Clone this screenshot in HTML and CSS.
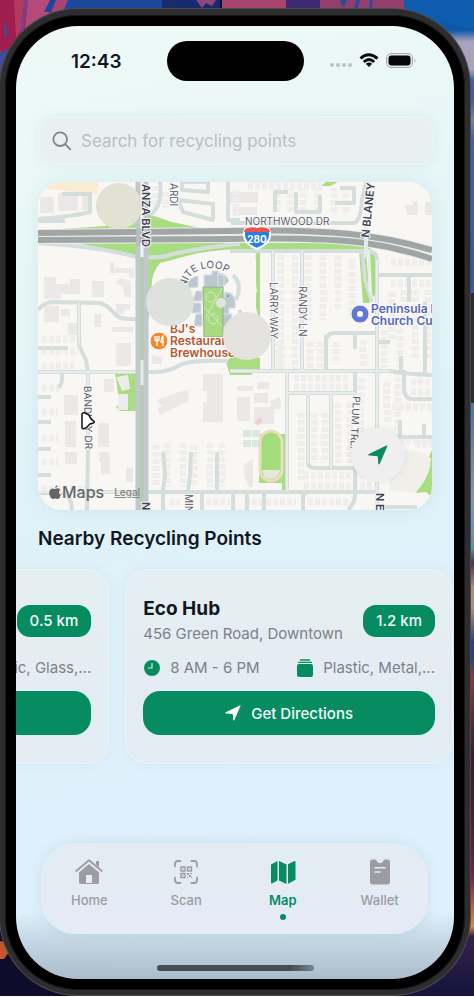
FILE: index.html
```html
<!DOCTYPE html>
<html lang="en">
<head>
<meta charset="utf-8">
<meta name="viewport" content="width=device-width, initial-scale=1">
<title>Recycling Points</title>
<link rel="stylesheet" href="styles.css">
</head>
<body>
<svg class="wallpaper" viewBox="0 0 474 997" preserveAspectRatio="none" aria-hidden="true">
  <defs>
    <linearGradient id="edge" x1="0" y1="0" x2="0" y2="1">
      <stop offset="0" stop-color="#1266b4"/><stop offset=".03" stop-color="#0b56a6"/>
      <stop offset=".042" stop-color="#a9a3bd"/><stop offset=".07" stop-color="#a9a3bd"/>
      <stop offset=".08" stop-color="#3d68ab"/><stop offset=".1" stop-color="#335fa5"/>
      <stop offset=".12" stop-color="#7482b0"/><stop offset=".14" stop-color="#3667ae"/>
      <stop offset=".28" stop-color="#2a5eae"/><stop offset=".42" stop-color="#5379ad"/>
      <stop offset=".5" stop-color="#8395b4"/><stop offset=".55" stop-color="#5d91b4"/>
      <stop offset=".565" stop-color="#52305f"/><stop offset=".59" stop-color="#b98a72"/>
      <stop offset=".61" stop-color="#b98a72"/><stop offset=".645" stop-color="#1b4496"/>
      <stop offset=".66" stop-color="#1b4496"/><stop offset=".68" stop-color="#94343e"/>
      <stop offset=".76" stop-color="#40182e"/><stop offset=".83" stop-color="#5a1730"/>
      <stop offset=".88" stop-color="#7e1d4b"/><stop offset=".91" stop-color="#c45d31"/>
      <stop offset=".93" stop-color="#d98a36"/><stop offset=".94" stop-color="#35214c"/>
      <stop offset="1" stop-color="#15143a"/>
    </linearGradient>
  </defs>
  <rect width="474" height="997" fill="#0f0c2b"/>
  <rect x="400" width="74" height="997" fill="url(#edge)"/>
  <path d="M0 0H80V70H0Z" fill="#a01d4f"/>
  <path d="M14 0h14l-4 24-8 14z" fill="#b23a5f"/>
  <path d="M24 0h4l-4 30-4 6z" fill="#7d3f8c"/>
  <path d="M28 0h24l-3 14-24 14z" fill="#b34a78"/>
  <path d="M0 52l12-4-8 20-4 6zM4 20l4 12-3 8z" fill="#3e4c96"/>
  <path d="M50 0h116v12H44z" fill="#1d479b"/>
  <path d="M56 0h12l-5 12H51z" fill="#a64375"/>
  <path d="M68 0h7v12h-7z" fill="#1a4a9f"/>
  <path d="M162 0h18v12h-18z" fill="#1b2a68"/>
  <path d="M178 0h42v12h-42z" fill="#172a70"/>
  <path d="M196 0h20l-4 6-6-3-4 5z" fill="#8b4778"/>
  <path d="M222 0h64v12h-64z" fill="#a8436c"/>
  <path d="M286 0h36v12h-36z" fill="#3c2a74"/>
  <path d="M320 0h84v26h-84z" fill="#94406e"/>
  <path d="M340 0h7l-3 7-3-2zM356 0h4l-2 8h-4zM370 0h3l-1 9h-3z" fill="#304b97"/>
  <path d="M404 0h70v30l-14-3-22-8-34-9z" fill="#0e5cb0"/>
  <path d="M0 942l5 1 4 10-5 7-4 0z" fill="#c4562a"/>
</svg>

<main class="phone">
  <div class="screen">
    <header class="status">
      <time class="clock">12:43</time>
      <div class="island"></div>
      <svg class="indicators" viewBox="0 0 88 20" aria-label="Wi-Fi, battery full">
        <g fill="#bcc3c4"><circle cx="3" cy="14" r="2"/><circle cx="9" cy="14" r="2"/><circle cx="15" cy="14" r="2"/><circle cx="21" cy="14" r="2"/></g>
        <g fill="none" stroke="#0b0e0f" stroke-width="3"><path d="M31.500 7.500q8-7.500 17 0"/><path d="M34.800 11q5.200-5 10.400 0"/></g>
        <path d="M36.800 12.800q3.200-2.500 6.400 0L40 16z" fill="#0b0e0f"/>
        <rect x="57.500" y="2.500" width="26" height="14" rx="4.500" fill="#e2e7e7" stroke="#a9afb0"/>
        <rect x="59.500" y="4.500" width="22" height="10" rx="3" fill="#050606"/>
        <path d="M85.500 7.500q2 2 0 4z" fill="#a9afb0"/>
      </svg>
    </header>

    <label class="search">
      <svg viewBox="0 0 20 20" aria-hidden="true"><g fill="none" stroke="#7f858b" stroke-width="1.800" stroke-linecap="round"><circle cx="8.200" cy="8.200" r="6.800"/><path d="M13.300 13.300l5 5"/></g></svg>
      <input type="search" placeholder="Search for recycling points" aria-label="Search for recycling points">
    </label>

    <section class="map" aria-label="Map">
      <svg class="map-art" viewBox="38 182 394 328" preserveAspectRatio="xMidYMid slice">
        <defs><path id="loop" d="M186 288Q189 268 212 268Q222 268 235 278"/></defs>
        <rect x="38" y="182" width="394" height="328" fill="#f8f7f4"/>
        <!-- parks and verges -->
        <path d="M38 182H98V194L38 188Z" fill="#faecd2"/>
        <g fill="#a9dd81">
          <path d="M62 229L105 226L137 216V230ZM148 214L172 222L205 229H148Z"/>
          <path d="M73 243H370V251H250Q235 244 160 263Q150 275 152 290L148 322V258L137 257Q100 246 73 243Z"/>
          <path d="M256 250H260V316H258L253 294L257 292L255 275Z"/>
          <path d="M359 250H366L370 303H363ZM370 251Q377 252 377 257V293L372 298Z"/>
          <path d="M115 373H137V411H120L116 407 122 402 118 393Z"/>
          <path d="M226 362L234 354L260 358V371H252V375H230Z"/>
          <path d="M260 434H285V490H282V483H259Z"/>
          <path d="M423 470L432 450V497L426 492L416 493Z"/>
          <path d="M321 186L326 182H338L330 186Z"/>
        </g>
        <path d="M116 377l12-2 2 14-8 2zM118 394h10v16h-10z" fill="#ececea"/>
        <path d="M160 265Q200 248 240 251Q255 250 256 262V318L235 345L158 330Q152 300 152 280Z" fill="#f8f7f4"/>
        <!-- buildings -->
        <g fill="#eae9e8">
          <path d="M40 197h14v16H40zM58 193h20v18H58zM82 195h7v15h-7zM44 277h12v7h14v-5h10v15H61v5H44zM92 281h12v16H92zM44 306h15v16H44zM61 309h9v7h-9zM68 323h13v12H68zM94 314h7v13h-7zM116 304h14v6h-6v4h-8zM112 327h21v5h-21zM120 278l11 3v16h-6l-3-11-7-2zM110 262h4v6h20v10h-5v-5h-19z"/>
          <path d="M116 343h15v23h-15zM104 379h10v13h-10zM64 395h14v20H64zM65 421h11v26H65zM98 423h11v24H98zM101 455h9v19h-9zM65 452h12v12H65zM126 468h7v14h-7zM99 452h10v10H99z"/>
          <path d="M157 400l22-8 9-2 1 11-11 5-18 9-3-6 5-3zM203 374h20v48h-20v-20h4v-11h-4zM152 355l10 2v7h-10zM237 386h16v5h-16zM257 382h12v7h-12zM237 397h13v24h-13zM254 393h14v10h-14zM270 401l10-4 1 12h-9zM254 407h20v17h-20zM244 464l9-5v28h-4l-5-11z"/>
          <path d="M405 205h8v-4h5v14h-11zM425 202h7v13h-7zM230 192h28v11h-28zM233 207h24v8h-24z"/>
        </g>
        <!-- rows of houses -->
        <g fill="none" stroke="#efeeec" stroke-width="7" stroke-dasharray="5 2">
          <path d="M42 339H84M42 351H78M42 366H74M42 388H60M42 412H58M42 438H58M42 462H58M42 489H90"/>
          <path d="M156 445V487M167 443V487M183 443V487M194 445V487M210 443V487M222 443V487"/>
          <path d="M281 255V370M295 255V370M308 255V320M323 255V320M338 255V310M352 258V318"/>
          <path d="M279 342V368M310 342V368M320 342V368M336 342V364M363 340V368M384 330V368M400 315V368M415 290V360M428 290V360"/>
          <path d="M294 378H350M294 387H350M301 413V480M314 413V463M325 413V463M338 403V463M350 403V463M361 378V460M304 486H372M304 475H372M387 382V424M398 370V430M411 382H432M411 392H432M392 407H432M392 440H432M415 444H432"/>
          <path d="M248 186H322M277 212V188M290 212V188M303 212V188M318 212V188M334 212V188M346 212V188M391 262H432M391 283H432M392 292V340M404 290V325"/>
          <path d="M245 502H296M308 502H350M170 502H180M206 502H230M155 186V208M166 192V208M236 190V218"/>
        </g>
        <g fill="none" stroke="#dae7e2" stroke-width="8" stroke-dasharray="7 3"><path d="M247 430V450M256 430V450"/></g>
        <path d="M389 452Q415 446 431 458Q430 478 415 493L390 490Z" fill="#f1efea"/>
        <path d="M255 422l5-5 3 4-5 5z" fill="#f0cfcc"/>
        <!-- minor roads -->
        <g fill="none" stroke="#d5dddd" stroke-width="4" stroke-linejoin="round">
          <path d="M38 310Q43 303 52 302L100 303Q107 305 113 312Q118 319 128 319H138M79 303V345Q82 352 86 360L88 372V450L87 510M38 372H150Q168 373 182 364Q195 360 228 361M38 348H68M62 373V381L59 388M38 397H51M38 422H51M38 449H51M38 475H51M38 493H60Q71 493 72 510M88 492H300"/>
          <path d="M137 257Q95 246 38 243M148 257Q162 258 173 254Q205 247 240 244M230 251H370Q377 253 377 260V510M273 251V370M302 251V370M326 335V370M355 335V349"/>
          <path d="M230 371H390Q405 374 432 375M287 372V491M287 393H355V372M308 393V463Q308 468 316 468H355M331 393V468M355 467V492M230 492H376M303 510V497Q303 492 310 492M355 492Q356 502 348 510M326 370V342Q326 333 335 333H377M377 275H432M409 275V302M425 302V374M378 342H390M378 320H394M401 356V371L404 372V388Q404 399 413 399H432M400 420V437H432M424 424V437M384 437H400M383 507H417"/>
          <path d="M163 452L165 475L163 491V510M191 452L190 475L188 491V510M217 452V491M202 492V510M233 492V510M247 492V510M264 492V510M231 223H355Q361 219 362 200L366 182M362 249L365 280L372 302M275 212V192H288M296 192V212H320V195M340 188H354V203H335M150 215Q163 206 160 182M38 221H65M62 194H90V212Q75 216 38 219M182 182H208V192L182 190V182M178 200L213 204V220L183 212L178 200M228 182V220H240M236 300Q243 285 233 275M240 350V310"/>
        </g>
        <g fill="none" stroke="#e7ecec" stroke-width="2">
          <path d="M88 372V450M38 372H137M230 371H390M377 260V510M287 372V491M38 492H137M369 250V290L375 302M273 251V370M302 251V370M79 303V345M287 393H355M308 393V463M331 393V468"/>
        </g>
        <!-- campus -->
        <g fill="#bcc8cf" stroke="#d8dfe3" stroke-width="1">
          <path d="M204 275h8v-4h6v4h6v12h-20zM218 273q8 0 11 8l-5 5h-6zM187 283q4-6 11-7v11l-9 1zM196 291h6v10h-9zM192 303h9v10h-9zM196 314h6v12h-8zM225 292q12 0 10 16h-6v6h-8zM222 314h10l-2 13h-8zM205 329h18v8h-18z"/>
        </g>
        <path d="M203 287H223V337H204Z" fill="#a8db80" stroke="#98a79d"/>
        <g fill="none" stroke="#d5e7c3" stroke-width="1"><circle cx="211" cy="297" r="5"/><circle cx="213" cy="319" r="5"/><path d="M204 307L222 326M222 288L206 317"/></g>
        <circle cx="221" cy="303" r="5" fill="#dfe4df"/><circle cx="228" cy="296" r="1" fill="#5a8fd8"/>
        <!-- track -->
        <rect x="260" y="431" width="22" height="50" rx="11" fill="#a3dd7b" stroke="#eadfb9" stroke-width="3"/>
        <path d="M262 470h18q-1 9-9 9t-9-9z" fill="#e5e6dc"/>
        <!-- boulevard and highway -->
        <path d="M142 182V510" stroke="#b4cbb0" stroke-width="8" fill="none"/>
        <path d="M142 182V257" stroke="#f4f5f3" stroke-width="4" fill="none"/>
        <path d="M138 182V510M146 182V510" stroke="#c0c8cb" stroke-width="5" fill="none"/>
        <path d="M142 360V385" stroke="#e5ebe8" stroke-width="3" fill="none"/>
        <g fill="none" stroke="#eceeed" stroke-width="8"><path d="M38 233L230 231Q300 229 350 234Q390 238 432 250M38 240L230 239Q320 237 365 243Q400 248 432 259"/></g>
        <g fill="none" stroke="#a0a5a6" stroke-width="6"><path d="M38 233L230 231Q300 229 350 234Q390 238 432 250M38 240L230 239Q320 237 365 243Q400 248 432 259"/></g>
        <path d="M138 228V246M146 228V246" stroke="#b6bdbf" stroke-width="4"/>
        <path d="M366 226V258" stroke="#e4eaea" stroke-width="4"/>
        <!-- street names -->
        <g class="street">
          <text transform="translate(142 184) rotate(90)" class="major">ANZA BLVD</text>
          <text transform="translate(170 183) rotate(90)">ARDI</text>
          <text x="245" y="225">NORTHWOOD DR</text>
          <text transform="translate(369 238) rotate(-84)" class="major">N BLANEY</text>
          <text transform="translate(270 282) rotate(90)">LARRY WAY</text>
          <text transform="translate(299 286) rotate(90)">RANDY LN</text>
          <text transform="translate(84 386) rotate(89)">BANDLEY DR</text>
          <text transform="translate(353 396) rotate(93)">PLUM TRL.</text>
          <text transform="translate(185 494) rotate(90)">MIN</text>
          <text transform="translate(142 502) rotate(90)" class="major">N</text>
          <text transform="translate(376 493) rotate(90)" class="major">N E</text>
          <text><textPath href="#loop">NITE LOOP</textPath></text>
        </g>
        <!-- route shield -->
        <path d="M245 229Q251 226 257 228Q263 226 269 229Q274 242 257 249Q240 242 245 229Z" fill="#2b7de4" stroke="#fff" stroke-width="2"/>
        <path d="M245 229Q251 226 257 228Q263 226 269 229L270 232H244Z" fill="#ee5148"/>
        <text x="257" y="243" class="route">280</text>
        <!-- places -->
        <circle cx="159" cy="341" r="9" fill="#f28a2c" stroke="#fff"/>
        <path d="M155 336v4q2 2 4 0v-4M157 336v10M163 346v-10q-2 2-2 6h2" fill="none" stroke="#fff" stroke-width="1.300"/>
        <g class="place food"><text x="170" y="333">BJ's</text><text x="170" y="345">Restaurar</text><text x="170" y="357">Brewhouse</text></g>
        <circle cx="360" cy="314" r="9" fill="#6477d2" stroke="#eef0fb"/><circle cx="360" cy="314" r="3" fill="#fff"/>
        <g class="place church"><text x="371" y="313">Peninsula I</text><text x="371" y="325">Church Cu</text></g>
        <!-- unloaded markers -->
        <circle cx="119" cy="206" r="23" fill="#e1e2d4"/>
        <circle cx="170" cy="302" r="24" fill="#dfe1de"/>
        <circle cx="247" cy="336" r="24" fill="#e4e3df"/>
      </svg>
      <div class="credit">
        <svg viewBox="0 0 12 14" aria-hidden="true"><path d="M8.600 0q.2 2-2.400 3.200Q6 1 8.600 0ZM6 4q1.500-.8 3-.7 1.600.1 2.500 1.300Q10 5.600 10 7.400q.1 1.800 1.800 2.700Q10.500 14 8.600 14q-1.300-.6-2.500-.6T3.700 14Q1.500 13.500.5 10-.6 5.500 2 3.900q1.500-1 4 .1Z" fill="#656664"/></svg>
        <span>Maps</span>
        <a href="#legal">Legal</a>
      </div>
      <button class="locate" type="button" aria-label="My location">
        <svg viewBox="0 0 20 20" aria-hidden="true"><path d="M19.300 1.200 11.800 18.800q-1 1.600-1.500-.3L9.700 11.200 1.300 10.600q-1.800-.5-.3-1.500L18.400.5q1.400-.3.900.7Z" fill="#078c62"/></svg>
      </button>
      <svg class="pointer" viewBox="0 0 16 20" aria-hidden="true"><path d="M2 4Q2 1.200 4.600 1.800L9 4Q10.500 8.500 14 10.300Q15 11.800 12.500 12.200Q9.500 12.400 8.500 14.300Q7 17 3.500 17.800Q1.700 18 2 15.500Z" fill="#fff" stroke="#111" stroke-width="1.500" stroke-linejoin="round"/></svg>
    </section>

    <h1>Nearby Recycling Points</h1>

    <section class="points">
      <article class="card">
        <div class="card-head">
          <span class="distance">0.5 km</span>
        </div>
        <div class="facts"><span class="fact">ic, Glass,...</span></div>
        <button class="directions" type="button" aria-label="Get Directions"></button>
      </article>
      <article class="card">
        <div class="card-head">
          <div class="place-name"><h2>Eco Hub</h2><p>456 Green Road, Downtown</p></div>
          <span class="distance">1.2 km</span>
        </div>
        <div class="facts">
          <span class="fact"><svg viewBox="0 0 18 18" aria-hidden="true"><circle cx="9" cy="9" r="8" fill="#078c62"/><path d="M9 4v5H5" fill="none" stroke="#cde8df" stroke-width="1.200"/></svg>8 AM - 6 PM</span>
          <span class="fact"><svg viewBox="0 0 18 18" aria-hidden="true"><rect x="1" y="5" width="16" height="13" rx="2" fill="#078c62"/><path d="M2.500 3.300h13M4.500 1h9" stroke="#078c62" stroke-width="1.300" stroke-linecap="round"/></svg>Plastic, Metal,...</span>
        </div>
        <button class="directions" type="button">
          <svg viewBox="0 0 20 20" aria-hidden="true"><path d="M19.300 1.200 11.800 18.800q-1 1.600-1.500-.3L9.700 11.200 1.300 10.600q-1.800-.5-.3-1.500L18.400.5q1.400-.3.900.7Z" fill="#fff"/></svg>
          Get Directions
        </button>
      </article>
    </section>

    <nav class="tabs">
      <a href="#home"><svg viewBox="0 0 28 28" aria-hidden="true"><g fill="#9c9da2"><path d="M4 14.500 14 6l10 8.500V24q0 2-2 2H6q-2 0-2-2Z"/><path d="M21 4h3v6l-3-2.500z"/></g><path d="M1.200 13 14 2.300 26.800 13" fill="none" stroke="#e3ebf3" stroke-width="4"/><path d="M1.200 13 14 2.300 26.800 13" fill="none" stroke="#9c9da2" stroke-width="1.800" stroke-linecap="round" stroke-linejoin="round"/><path d="M21 3h3v6l-3-2.500z" fill="#9c9da2"/><path d="M11 17h6v8h-6z" fill="#e6ecf4"/></svg>Home</a>
      <a href="#scan"><svg viewBox="0 0 28 28" aria-hidden="true"><g fill="none" stroke="#9c9da2" stroke-width="1.800" stroke-linecap="round"><path d="M3 8.500V6q0-3 3-3h2.500M19.500 3H22q3 0 3 3v2.500M25 19.500V22q0 3-3 3h-2.500M8.500 25H6q-3 0-3-3v-2.500"/></g><g fill="none" stroke="#9c9da2" stroke-width="1.400"><path d="M9 9h4v4H9zM15.500 9h4v4h-4zM9 15.500h4v4H9z"/></g><path d="M10.500 10.500h1v1h-1zM17 10.500h1v1h-1zM10.500 17h1v1h-1zM15 15h2v2h-2zM18 15h2v1h-2zM17 17h2v2h-2zM15 19h1v1h-1zM19 19h1v1h-1z" fill="#9c9da2"/></svg>Scan</a>
      <a href="#map" class="active" aria-current="page"><svg viewBox="0 0 28 28" aria-hidden="true"><g fill="#078c62"><path d="M2 6.500 8.500 3v19.500L3 25.500q-1 .3-1-.8ZM10 3l7.500 3.500V26L10 22.500ZM19 6.300 25.500 3q1-.3 1 .8v18L19 25.800Z"/></g></svg>Map</a>
      <a href="#wallet"><svg viewBox="0 0 28 28" aria-hidden="true"><path d="M6.500 1.500H9q1.500 0 2 2 .8 1.500 3 1.500t3-1.500q.5-2 2-2h2.500Q24 1.500 24 4v20q0 2.500-2.500 2.500h-15Q4 26.500 4 24V4q0-2.500 2.500-2.500Z" fill="#9c9da2"/><path d="M9 9.800h10M9 14h5" stroke="#e6ecf4" stroke-width="1.600" stroke-linecap="round"/></svg>Wallet</a>
    </nav>
    <div class="home-bar"></div>
  </div>
</main>
<div class="side-key"></div>
</body>
</html>
```

FILE: styles.css
```css
* { box-sizing: border-box; }

body {
  margin: 0;
  position: relative;
  font-family: Inter, "Liberation Sans", sans-serif;
  color: #12171f;
  overflow-x: hidden;
}

h1, h2, p { margin: 0; }
button { border: 0; padding: 0; font: inherit; cursor: pointer; }
svg { display: block; flex: none; }

.wallpaper {
  position: absolute;
  inset: 0;
  width: 100%;
  height: 100%;
  z-index: -1;
}

.side-key {
  position: absolute;
  right: 0;
  top: 293px;
  width: 3px;
  height: 110px;
  background: #2c2c2e;
}

.phone {
  margin: 9px 4px 1px 0;
  padding: 11px;
  background: #000;
  border: 5px solid #2d2d2f;
  border-top-width: 6px;
  border-radius: 78px;
  box-shadow: inset 0 0 0 1px #171718, 0 0 0 1px #4b4d50;
}

.screen {
  display: flex;
  flex-direction: column;
  border-radius: 62px;
  overflow: hidden;
  background:
    linear-gradient(to top, rgba(120, 135, 150, .5), rgba(120, 135, 150, .26) 36px, transparent 68px),
    linear-gradient(165deg, #effaf6 0, #e9f7f7 16%, #e0f2f8 45%, #def0fc 80%, #def1fe 100%);
}

.status {
  display: grid;
  grid-template-columns: 1fr 137px 1fr;
  align-items: center;
  padding-top: 15px;
}
.clock { justify-self: center; font-size: 19px; font-weight: 600; padding-left: 10px; }
.island { height: 40px; border-radius: 20px; background: #000; }
.indicators { width: 88px; height: 20px; justify-self: start; margin-left: 25px; }

.search {
  display: flex;
  align-items: center;
  gap: 9px;
  height: 49px;
  margin: 35px 20px 0 22px;
  padding: 0 13px;
  border-radius: 17px;
  border: 1px solid #eff6f5;
  background: #e9f0f1;
  box-shadow: 0 0 12px rgba(80, 120, 125, .09);
}
.search svg { width: 20px; height: 20px; }
.search input {
  flex: 1;
  min-width: 0;
  padding: 0;
  border: 0;
  outline: 0;
  background: none;
  font: 400 17px Inter, "Liberation Sans", sans-serif;
}
.search input::placeholder { color: #b9bfc2; opacity: 1; }

.map {
  position: relative;
  margin: 17px 22px 0;
  aspect-ratio: 394 / 328;
  border-radius: 24px;
  overflow: hidden;
  box-shadow: 0 0 16px rgba(80, 120, 130, .1);
}
.map-art { width: 100%; height: 100%; }
.street text { font: 400 10px Inter, sans-serif; fill: #5c6070; stroke: #f8f8f6; stroke-width: 2px; paint-order: stroke; }
.street .major { font-weight: 600; fill: #3d4355; font-size: 11px; }
.route { font: 700 10px Inter, sans-serif; fill: #fff; text-anchor: middle; }
.place text { font: 600 12px Inter, sans-serif; stroke: #fbfaf8; stroke-width: 2px; paint-order: stroke; }
.food text { fill: #b25a35; }
.church text { fill: #5567b8; }

.credit {
  position: absolute;
  left: 11px;
  bottom: 8px;
  display: flex;
  align-items: center;
  gap: 1px;
  font-size: 16px;
  line-height: 20px;
  font-weight: 500;
  color: #666765;
}
.credit svg { width: 12px; height: 14px; }
.credit a { margin-left: 9px; font-size: 10px; color: #858683; }

.locate {
  position: absolute;
  right: 27px;
  bottom: 28px;
  display: grid;
  place-items: center;
  width: 54px;
  height: 54px;
  border-radius: 50%;
  background: #eeefee;
  box-shadow: 0 0 6px rgba(80, 90, 90, .12);
}
.locate svg { width: 20px; height: 20px; }

.pointer { position: absolute; left: 42px; top: 229px; width: 16px; height: 20px; }

h1 { margin: 17px 22px 0; font-size: 19px; line-height: 24px; font-weight: 600; }

.points {
  display: flex;
  justify-content: flex-end;
  gap: 16px;
  margin-top: 18px;
  padding-right: 1px;
}
.card {
  flex: 0 0 75%;
  padding: 26px 17px 28px;
  border: 1px solid #ebf3f7;
  border-radius: 22px;
  background: linear-gradient(#e5eef2, #e4ecf4);
  box-shadow: 0 0 12px rgba(100, 150, 180, .1);
}
.card-head { display: flex; align-items: center; min-height: 50px; }
.place-name { flex: 1; }
.card h2 { font-size: 19px; line-height: 25px; font-weight: 700; }
.card p { font-size: 15px; line-height: 25px; color: #7c8188; white-space: nowrap; }
.distance {
  margin-left: auto;
  padding: 0 13px;
  border-radius: 13px;
  background: #078c62;
  color: #f2fbf8;
  font-size: 15px;
  line-height: 32px;
  font-weight: 500;
  white-space: nowrap;
}
.facts {
  display: flex;
  justify-content: space-between;
  margin-top: 10px;
  font-size: 15px;
  line-height: 24px;
  color: #7c8188;
  white-space: nowrap;
}
.fact { display: flex; align-items: center; gap: 9px; }
.fact:only-child { margin-left: auto; }
.fact svg { width: 18px; height: 18px; }
.directions {
  display: flex;
  justify-content: center;
  align-items: center;
  gap: 10px;
  width: 100%;
  height: 44px;
  margin-top: 11px;
  border-radius: 17px;
  background: #078c62;
  color: #f2fbf8;
  font-size: 15px;
  font-weight: 500;
}
.directions svg { width: 16px; height: 16px; }

.tabs {
  display: grid;
  grid-template-columns: repeat(4, 1fr);
  height: 91px;
  margin: 79px 26px 0 25px;
  padding-top: 15px;
  border-radius: 34px;
  background: linear-gradient(#e3ebf3, #e4ebf4);
  box-shadow: 0 0 14px rgba(90, 130, 160, .14);
}
.tabs a {
  display: flex;
  flex-direction: column;
  align-items: center;
  gap: 4px;
  color: #9c9da2;
  font-size: 13px;
  line-height: 20px;
  font-weight: 500;
  text-decoration: none;
}
.tabs svg { width: 28px; height: 28px; }
.tabs .active { color: #078c62; font-weight: 600; }
.tabs .active::after { content: ""; width: 6px; height: 6px; border-radius: 50%; background: #078c62; }

.home-bar {
  width: 157px;
  height: 6px;
  margin: 31px auto 8px;
  border-radius: 3px;
  background: linear-gradient(90deg, #444c54 85%, #79838c);
}
```
